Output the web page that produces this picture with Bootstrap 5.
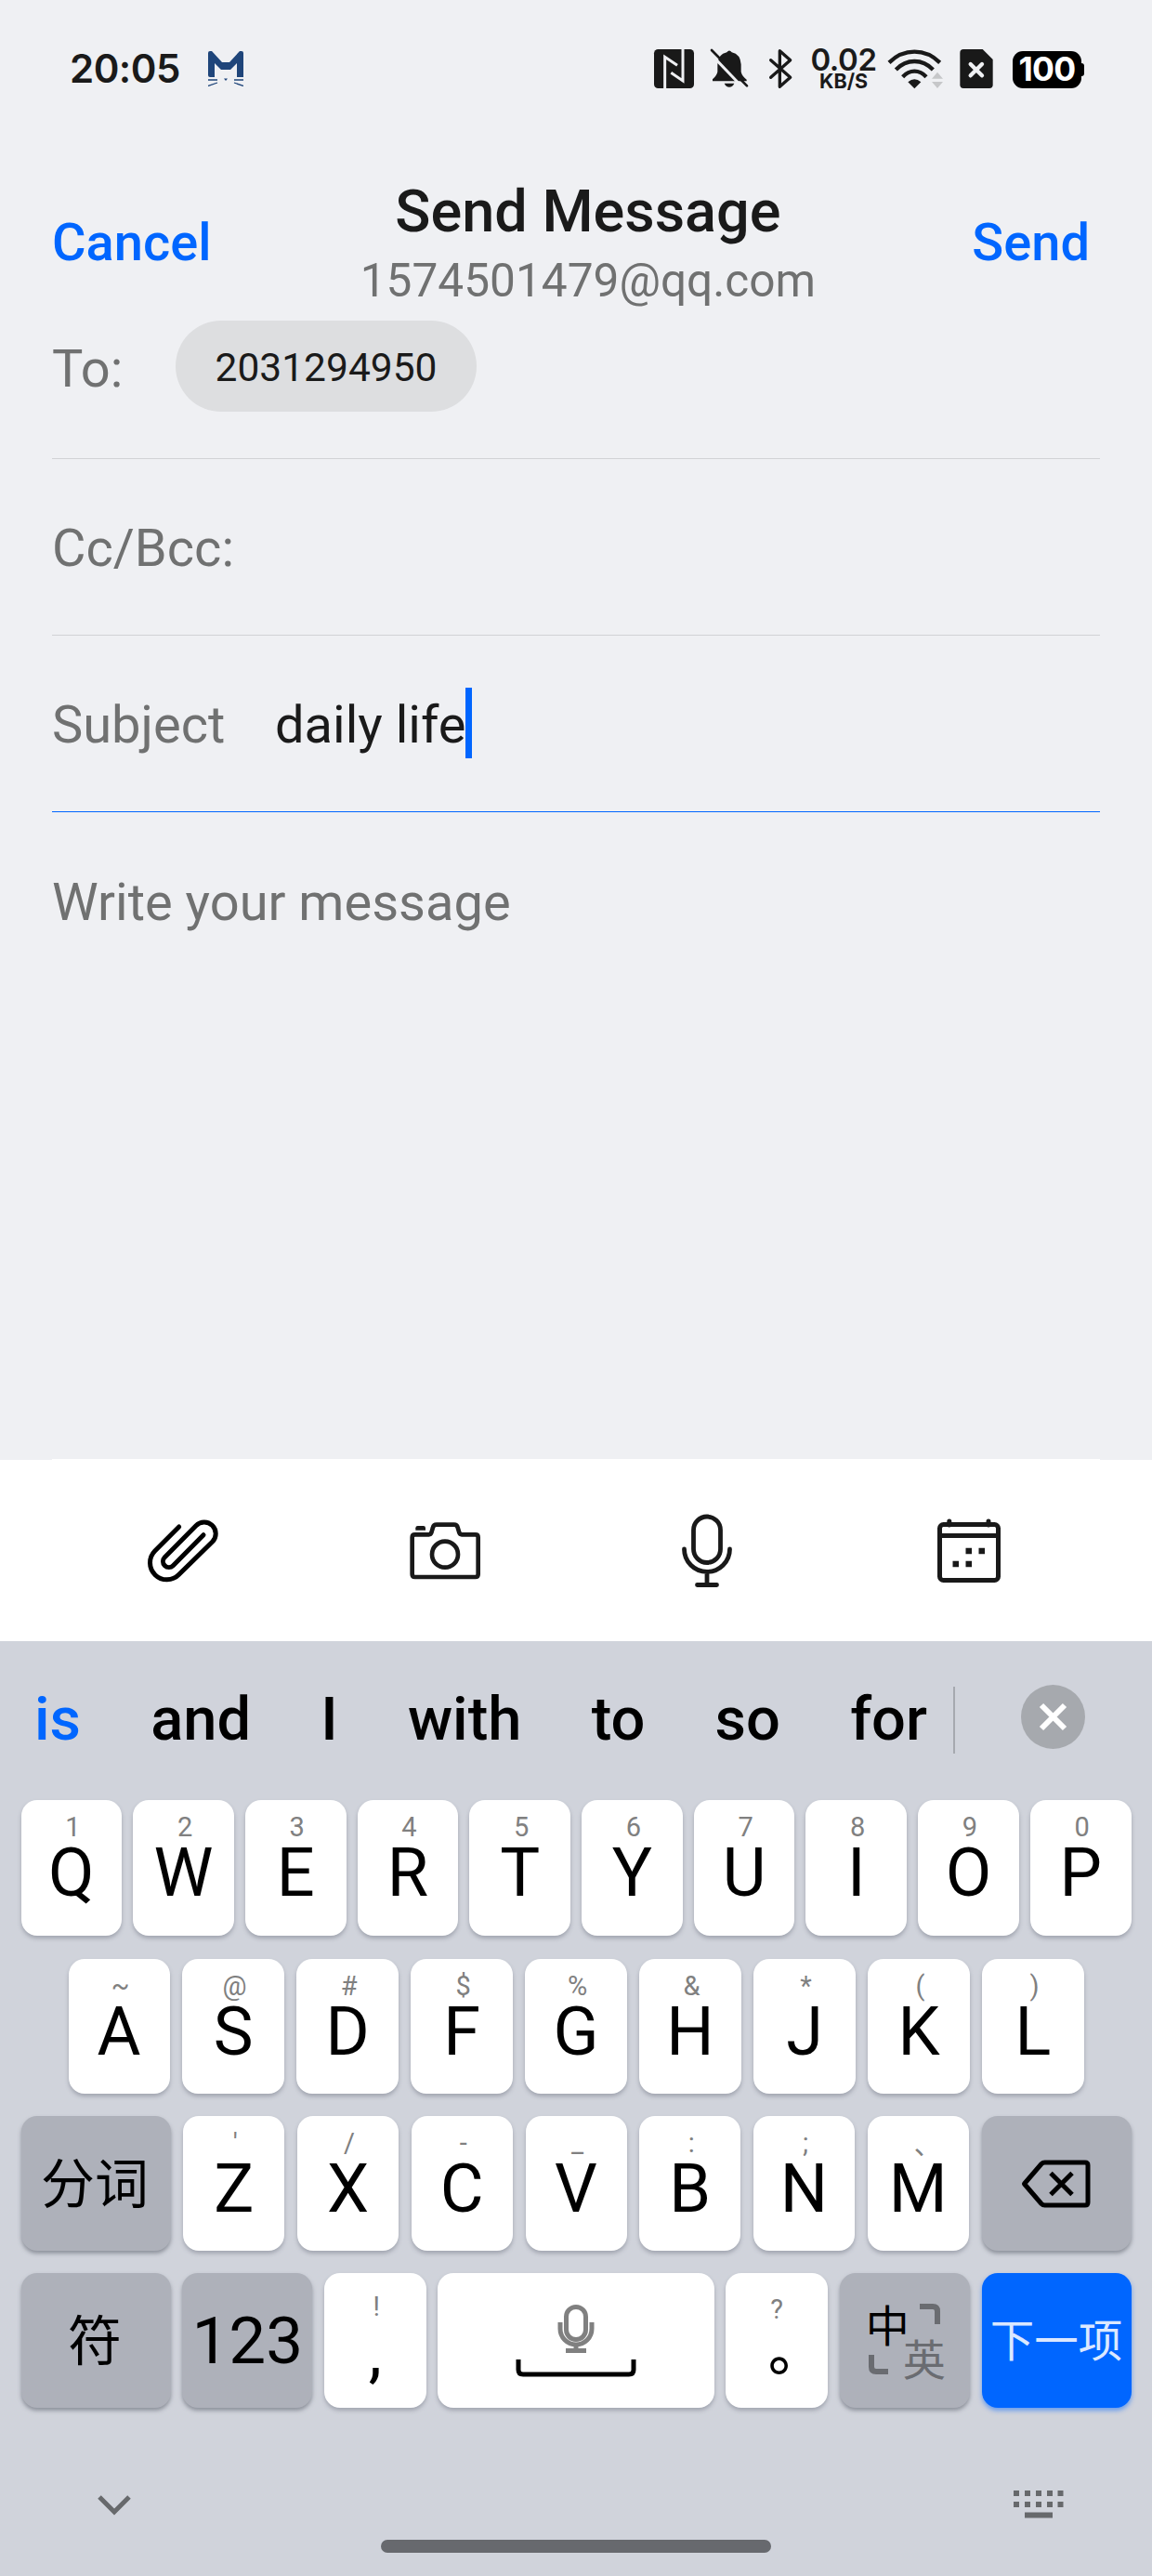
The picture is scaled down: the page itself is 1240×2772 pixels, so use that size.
<!DOCTYPE html>
<html lang="en">
<head>
<meta charset="utf-8">
<meta name="viewport" content="width=device-width, initial-scale=1">
<title>Send Message</title>
<link href="https://cdn.jsdelivr.net/npm/bootstrap@5.3.0/dist/css/bootstrap.min.css" rel="stylesheet">
<style>
  body { width: 1240px; height: 2772px; overflow: hidden; background: #eff0f3; color: #1a1a1a; font-family: Roboto, "Noto Sans CJK SC", sans-serif; line-height: 1; }
  svg { display: block; flex: none; }
  .phone { width: 1240px; height: 2772px; }

  /* status bar */
  .statusbar { height: 148px; padding: 0 73px 0 75px; }
  .clock { font: 600 42px/50px Inter, sans-serif; letter-spacing: -.5px; width: 149px; white-space: nowrap; }
  .speed { width: 76px; margin: 0 9px 0 16px; font-family: Inter, sans-serif; font-weight: 600; text-align: center; white-space: nowrap; }
  .speed-num { font-size: 33px; line-height: 27px; letter-spacing: -.4px; }
  .speed-unit { font-size: 21.5px; line-height: 19px; font-weight: 700; }
  .battery { position: relative; width: 74px; height: 40px; margin: 2px 3px 0 20px; border-radius: 11px; background: #000; color: #fff; font: 700 35.5px/40px Inter, sans-serif; letter-spacing: -.8px; text-align: center; }
  .battery::after { content: ""; position: absolute; right: -3px; top: 13px; width: 4px; height: 14px; border-radius: 0 3px 3px 0; background: #000; }
  .gap-bell { margin-left: 15px; }
  .gap-bt { margin-left: 19px; }
  .gap-sim { margin-left: 16px; }

  /* compose header */
  .compose-head { height: 197px; padding: 0 67px 0 56px; }
  .head-link { color: #0066ff; font-size: 56px; font-weight: 500; line-height: 66px; padding: 0; margin-top: 80px; border: 0; background: none; }
  .head-mid { margin-left: -8px; }
  .head-title { font-size: 63px; font-weight: 500; line-height: 76px; margin: 42px 0 6px; }
  .head-mail { font-size: 49.6px; line-height: 60px; color: #707171; }

  /* fields */
  .fields { padding: 0 56px; font-size: 56px; }
  .field { height: 190px; border-bottom: 1px solid #d1d2d5; line-height: 66px; white-space: nowrap; padding-top: 3px; }
  .field-to { height: 149px; padding-top: 0; }
  .field-to .hint { margin: 19px 0 0; width: 133px; }
  .field-active { border-color: #0066ff; }
  .field-active .hint { width: 240px; }
  .hint { color: #707171; }
  .chip { width: 324px; height: 98px; border-radius: 49px; background: #dddee0; font-size: 42.5px; line-height: 101px; text-align: center; }
  .caret { width: 7px; height: 76px; margin-bottom: 5px; background: #0066ff; }
  .write { padding-top: 64px; line-height: 66px; }

  /* attachments */
  .tools { height: 195px; background: #fff; padding: 0 56px; }
  .tools-rule { height: 1px; margin: 0 56px; background: #fff; }

  /* keyboard */
  .keyboard { height: 1006px; background: #d0d3db; color: #000; }
  .suggest { height: 171px; padding: 41px 0 0 37px; font-size: 65px; font-weight: 500; line-height: 86px; }
  .suggest-words { width: 961px; }
  .word-first { color: #0066ff; }
  .suggest-rule { width: 2px; height: 72px; background: #a6a9af; margin: 8px 71px 0 28px; }
  .suggest-close { margin-top: 6px; }
  .keyrow { height: 145px; margin-bottom: 24px; padding: 0 22.5px; }
  .keyrow-a { gap: 12px; height: 146px; margin-bottom: 25px; }
  .keyrow-b { gap: 13.8px; }
  .keyrow-c { gap: 12.8px; }
  .row-mid { padding: 0 73.5px; }
  .keycap { flex: 1 1 0; border-radius: 17px; background: #fff; box-shadow: 0 3px 4px rgba(100,105,120,.42); text-align: center; white-space: nowrap; }
  .keycap .alt { display: block; font-size: 29px; line-height: 34px; margin-top: 12px; color: #808080; padding-left: 3px; }
  .keycap .main { display: block; font-size: 72px; line-height: 65px; }
  .keycap .alt-dun { font-family: "Noto Sans CJK SC", sans-serif; padding-left: 20px; }
  .keycap .alt-low { margin-top: 19px; }
  .keycap .alt-q { margin-top: 22px; padding: 0; }
  .keycap .stop { font-family: "Noto Sans CJK SC", sans-serif; font-weight: 500; font-size: 60px; line-height: 46px; padding-left: 42px; width: 109px; }
  .keycap.dim { background: #aeb1ba; box-shadow: 0 3px 4px rgba(90,95,105,.55); }
  .keycap.go { background: #0066ff; color: #dbe8ff; box-shadow: 0 3px 5px rgba(0,102,255,.5); font-size: 47.5px; line-height: 140px; }
  .w-side { flex: 0 0 161px; }
  .w-mid { flex: 0 0 140px; }
  .w-punct { flex: 0 0 109.5px; }
  .cjk { font-family: "Noto Sans CJK SC", sans-serif; }
  .cjk-key { font-size: 58px; line-height: 138px; padding-right: 2px; }
  .num-key { font-size: 71px; line-height: 146px; }
  .lang { position: relative; }
  .lang span { position: absolute; font-size: 47px; line-height: 50px; }
  .lang .zh { left: 28px; top: 29px; }
  .lang .en { left: 68px; top: 65px; font-size: 46px; color: #6a6c71; }
  .lang svg { position: absolute; left: 0; top: 0; }
  .navrow { height: 176px; padding: 0 94px 0 105px; }
  .nav-hide { margin-top: 69px; }
  .nav-board { margin-top: 64px; }
  .homebar { position: absolute; left: 410px; bottom: 25px; width: 420px; height: 14px; border-radius: 7px; background: #67696e; }
</style>
<script src="https://cdn.jsdelivr.net/npm/bootstrap@5.3.0/dist/js/bootstrap.bundle.min.js"></script>
</head>
<body>
<div class="phone d-flex flex-column position-relative">

  <div class="statusbar d-flex align-items-center">
    <div class="clock">20:05</div>
    <svg width="38" height="38" viewBox="0 0 38 38" fill="#1f457a"><path d="M0 2 Q0 0 2 0 H4 L15 12 H23 L34 0 H36 Q38 0 38 2 V28 H31 V13 L24 20 H14 L7 13 V28 H2 Q0 28 0 26Z"/><path d="M0 31H10M0 37.500L10 34M28 31H38M28 34L38 37.500" stroke="#1f457a" stroke-width="1.300"/><path d="M17 29.500h4l-2 2.500z"/></svg>
    <div class="ms-auto d-flex align-items-center">
      <svg width="45" height="48" viewBox="24 30 135 144"><rect x="27" y="39" width="129" height="126" rx="13" fill="#191919"/><path d="M62 166V64L102 91M120 38V141L82 115" fill="none" stroke="#eff0f3" stroke-width="9"/></svg>
      <svg class="gap-bell" width="45" height="48" viewBox="204 30 135 144"><path d="M216 142V136Q230 124 232 112V88Q234 54 262 49Q270 38 278 49Q306 55 308 88V112Q311 126 326 137V142Z" fill="#191919"/><path d="M254 149H286Q281 161 270 161Q259 161 254 149Z" fill="#191919"/><path d="M205 49L318 167" stroke="#eff0f3" stroke-width="9"/><path d="M213 42L327 157" stroke="#191919" stroke-width="8" stroke-linecap="round"/></svg>
      <svg class="gap-bt" width="27" height="48" viewBox="396 30 81 144" fill="none" stroke="#191919" stroke-width="10" stroke-linecap="round" stroke-linejoin="round"><path d="M404 74L467 130L433 160V44L467 74L404 130"/></svg>
      <div class="speed"><div class="speed-num">0.02</div><div class="speed-unit">KB/S</div></div>
      <svg width="61" height="48" viewBox="780 30 183 144"><g fill="none" stroke="#191919" stroke-width="13"><path d="M786 82Q822 47 868 47Q914 47 950 82"/><path d="M808 105Q834 78 868 78Q902 78 928 105"/><path d="M830 128Q847 110 868 110Q889 110 906 128"/></g><path d="M847 145Q868 126 889 145L868 166Z" fill="#191919"/><path d="M924 134L942 113L960 134ZM924 144L942 165L960 144Z" fill="#c6c7c9"/></svg>
      <svg class="gap-sim" width="38" height="48" viewBox="1011 30 114 144"><path d="M1026 39H1088L1121 72V154Q1121 165 1110 165H1026Q1015 165 1015 154V50Q1015 39 1026 39Z" fill="#191919"/><path d="M1049 87L1086 124M1086 87L1049 124" stroke="#eff0f3" stroke-width="13" stroke-linecap="round"/></svg>
      <div class="battery">100</div>
    </div>
  </div>

  <header class="compose-head d-flex justify-content-between align-items-start">
    <button class="head-link">Cancel</button>
    <div class="head-mid text-center">
      <h1 class="head-title">Send Message</h1>
      <div class="head-mail">1574501479@qq.com</div>
    </div>
    <button class="head-link">Send</button>
  </header>

  <main class="fields flex-grow-1">
    <div class="field field-to d-flex align-items-start"><span class="hint">To:</span><span class="chip">2031294950</span></div>
    <div class="field d-flex align-items-center"><span class="hint">Cc/Bcc:</span></div>
    <div class="field field-active d-flex align-items-center"><span class="hint">Subject</span><span>daily life</span><span class="caret"></span></div>
    <div class="write hint">Write your message</div>
  </main>

  <div class="tools-rule"></div>
  <div class="tools d-flex align-items-center">
    <div class="col-3 d-flex justify-content-center"><svg width="78" height="71" viewBox="24 36 234 213" fill="none" stroke="#000" stroke-width="15" stroke-linecap="round"><path d="M128 66L50 144A54 54 0 0 0 128 220L236 114A37 37 0 0 0 183 62L82 164A19 19 0 0 0 109 191L207 92"/></svg></div>
    <div class="col-3 d-flex justify-content-center"><svg width="78" height="65" viewBox="870 45 234 195" fill="none" stroke="#191919" stroke-width="14"><path d="M890 91h45q6 0 8-6l5-17q2-9 12-9h56q10 0 12 9l5 17q2 6 8 6h44q9 0 9 9v119q0 9-9 9h-195q-9 0-9-9v-119q0-9 9-9z"/><circle cx="987" cy="155" r="42"/><path d="M892 77V70Q892 63 899 63H917Q924 63 924 70V77Z" fill="#191919" stroke="none"/></svg></div>
    <div class="col-3 d-flex justify-content-center"><svg width="60" height="84" viewBox="731 1626 60 84" fill="none" stroke="#191919" stroke-width="4.800" stroke-linecap="round"><rect x="746.500" y="1631" width="29" height="49.500" rx="14.500"/><path d="M736.500 1666A24.500 24.500 0 0 0 785.500 1666M761 1691V1704M750.500 1704.500H771.500"/></svg></div>
    <div class="col-3 d-flex justify-content-center"><svg width="74" height="76" viewBox="1006 1630 74 76" fill="none" stroke="#191919" stroke-width="5"><rect x="1011.500" y="1639.500" width="63" height="60" rx="4"/><path d="M1010 1651.500H1076"/><path d="M1021.800 1636V1640M1064 1636V1640" stroke-linecap="round"/><path d="M1039.500 1668h6.500M1053.500 1668h6.500M1025.500 1682h6.500M1039.500 1682h6.500" stroke-width="6.500"/></svg></div>
  </div>

  <section class="keyboard position-relative">
    <div class="suggest d-flex align-items-start">
      <div class="suggest-words d-flex justify-content-between"><span class="word-first">is</span><span>and</span><span>I</span><span>with</span><span>to</span><span>so</span><span>for</span></div>
      <div class="suggest-rule"></div>
      <svg class="suggest-close" width="69" height="69" viewBox="0 0 69 69"><circle cx="34.500" cy="34.500" r="34.500" fill="#a6a9ae"/><path d="M22 22L47 47M47 22L22 47" stroke="#fff" stroke-width="6"/></svg>
    </div>

    <div class="keyrow keyrow-a d-flex">
      <div class="keycap"><span class="alt">1</span><span class="main">Q</span></div>
      <div class="keycap"><span class="alt">2</span><span class="main">W</span></div>
      <div class="keycap"><span class="alt">3</span><span class="main">E</span></div>
      <div class="keycap"><span class="alt">4</span><span class="main">R</span></div>
      <div class="keycap"><span class="alt">5</span><span class="main">T</span></div>
      <div class="keycap"><span class="alt">6</span><span class="main">Y</span></div>
      <div class="keycap"><span class="alt">7</span><span class="main">U</span></div>
      <div class="keycap"><span class="alt">8</span><span class="main">I</span></div>
      <div class="keycap"><span class="alt">9</span><span class="main">O</span></div>
      <div class="keycap"><span class="alt">0</span><span class="main">P</span></div>
    </div>
    <div class="keyrow keyrow-b row-mid d-flex">
      <div class="keycap"><span class="alt">~</span><span class="main">A</span></div>
      <div class="keycap"><span class="alt">@</span><span class="main">S</span></div>
      <div class="keycap"><span class="alt">#</span><span class="main">D</span></div>
      <div class="keycap"><span class="alt">$</span><span class="main">F</span></div>
      <div class="keycap"><span class="alt">%</span><span class="main">G</span></div>
      <div class="keycap"><span class="alt">&amp;</span><span class="main">H</span></div>
      <div class="keycap"><span class="alt">*</span><span class="main">J</span></div>
      <div class="keycap"><span class="alt">(</span><span class="main">K</span></div>
      <div class="keycap"><span class="alt">)</span><span class="main">L</span></div>
    </div>
    <div class="keyrow keyrow-b d-flex">
      <div class="keycap dim w-side cjk cjk-key">分词</div>
      <div class="keycap"><span class="alt">'</span><span class="main">Z</span></div>
      <div class="keycap"><span class="alt">/</span><span class="main">X</span></div>
      <div class="keycap"><span class="alt">-</span><span class="main">C</span></div>
      <div class="keycap"><span class="alt">_</span><span class="main">V</span></div>
      <div class="keycap"><span class="alt">:</span><span class="main">B</span></div>
      <div class="keycap"><span class="alt">;</span><span class="main">N</span></div>
      <div class="keycap"><span class="alt alt-dun">、</span><span class="main">M</span></div>
      <div class="keycap dim w-side d-flex align-items-center justify-content-center"><svg width="76" height="52" viewBox="0 0 76 52" fill="none" stroke="#000" stroke-width="5"><path d="M3.500 26L22 4.500Q23.500 3 25.500 3H69Q72 3 72 6V46Q72 49 69 49H25.500Q23.500 49 22 47.500Z" stroke-linejoin="round"/><path d="M32 14.500L55 37.500M55 14.500L32 37.500"/></svg></div>
    </div>
    <div class="keyrow keyrow-c d-flex">
      <div class="keycap dim w-side cjk cjk-key">符</div>
      <div class="keycap dim w-mid num-key">123</div>
      <div class="keycap w-punct"><span class="alt alt-low">!</span><span class="main">,</span></div>
      <div class="keycap d-flex flex-column align-items-center">
        <svg width="132" height="116" viewBox="0 0 132 116" fill="none"><g stroke="#808080" stroke-width="5"><rect x="55.500" y="36.500" width="21" height="35" rx="10.500"/><path d="M49 53V60A17 17 0 0 0 83 60V53M66 77V83M55 83.500H77"/></g><path d="M4 93V104Q4 109 9 109H123Q128 109 128 104V93" stroke="#000" stroke-width="5"/></svg>
      </div>
      <div class="keycap w-punct"><span class="alt alt-q">?</span><span class="main stop">。</span></div>
      <div class="keycap dim w-mid lang cjk">
        <svg width="140" height="146" viewBox="903 2446 140 146" fill="none" stroke="#6a6c71" stroke-width="6"><path d="M989 2482H1003Q1008 2482 1008 2487V2501M937 2534V2547Q937 2552 942 2552H955"/></svg>
        <span class="zh">中</span><span class="en">英</span>
      </div>
      <div class="keycap go w-side cjk">下一项</div>
    </div>

    <div class="navrow d-flex justify-content-between align-items-start">
      <svg class="nav-hide" width="36" height="23" viewBox="0 0 36 23" fill="none" stroke="#67696c" stroke-width="5"><path d="M2 3L18 19L34 3"/></svg>
      <svg class="nav-board" width="55" height="32" viewBox="0 0 55 32" fill="#67696c"><path d="M0 1h6v6h-6zM12 1h6v6h-6zM24 1h6v6h-6zM36 1h6v6h-6zM47.500 1h6v6h-6zM0 13h6v6h-6zM12 13h6v6h-6zM24 13h6v6h-6zM36 13h6v6h-6zM47.500 13h6v6h-6zM12 24.500h30v6h-30z"/></svg>
    </div>
    <div class="homebar"></div>
  </section>
</div>
</body>
</html>
